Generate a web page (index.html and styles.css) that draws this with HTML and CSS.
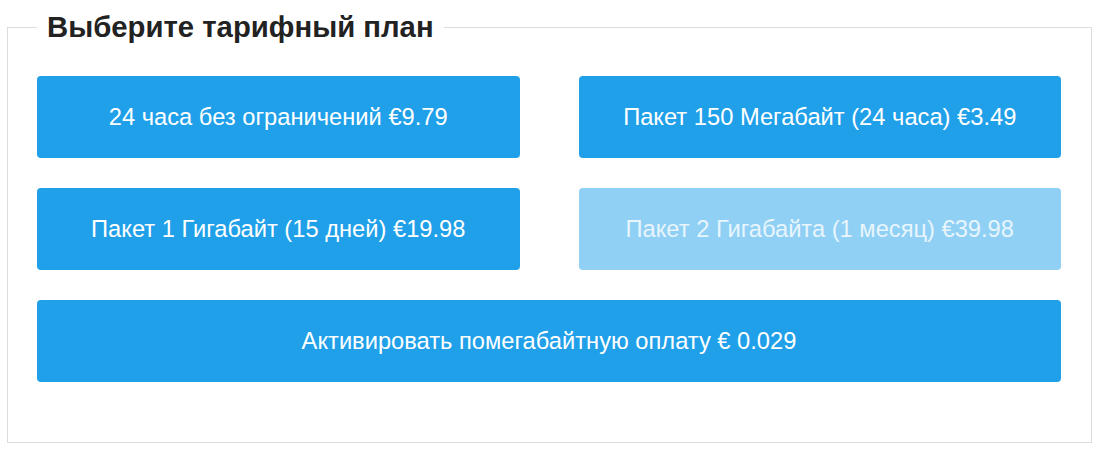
FILE: index.html
```html
<!DOCTYPE html>
<html lang="ru">
<head>
<meta charset="utf-8">
<link rel="stylesheet" href="styles.css">
</head>
<body>
<fieldset class="plans">
  <legend class="plans-title">Выберите тарифный план</legend>
  <div class="plan-grid">
    <button class="plan-btn">24 часа без ограничений €9.79</button>
    <button class="plan-btn">Пакет 150 Мегабайт (24 часа) €3.49</button>
    <button class="plan-btn">Пакет 1 Гигабайт (15 дней) €19.98</button>
    <button class="plan-btn is-disabled" disabled>Пакет 2 Гигабайта (1 месяц) €39.98</button>
    <button class="plan-btn plan-wide">Активировать помегабайтную оплату € 0.029</button>
  </div>
</fieldset>
</body>
</html>
```

FILE: styles.css
```css
html, body {
  margin: 0;
  padding: 0;
  background: #ffffff;
}
body {
  font-family: "Liberation Sans", Arial, sans-serif;
  padding: 11px 8px 0 7px;
}
.plans {
  margin: 0;
  border: 1px solid #dcdcdc;
  padding: 33px 30px 60px 29px;
  min-width: 0;
}
.plans-title {
  font-size: 29.3px;
  font-weight: bold;
  color: #222222;
  line-height: 32px;
  padding: 0 10px;
}
.plan-grid {
  display: grid;
  grid-template-columns: 1fr 1fr;
  column-gap: 59px;
  row-gap: 30px;
}
.plan-btn {
  height: 82px;
  border: 0;
  border-radius: 4px;
  background: #1fa0e9;
  color: #ffffff;
  font-family: "Liberation Sans", Arial, sans-serif;
  font-size: 23.7px;
  padding: 0 10px;
  cursor: pointer;
}
.plan-btn.is-disabled {
  background: #8fd0f4;
  color: #e8f5fd;
  cursor: default;
}
.plan-wide {
  grid-column: 1 / -1;
}
```
